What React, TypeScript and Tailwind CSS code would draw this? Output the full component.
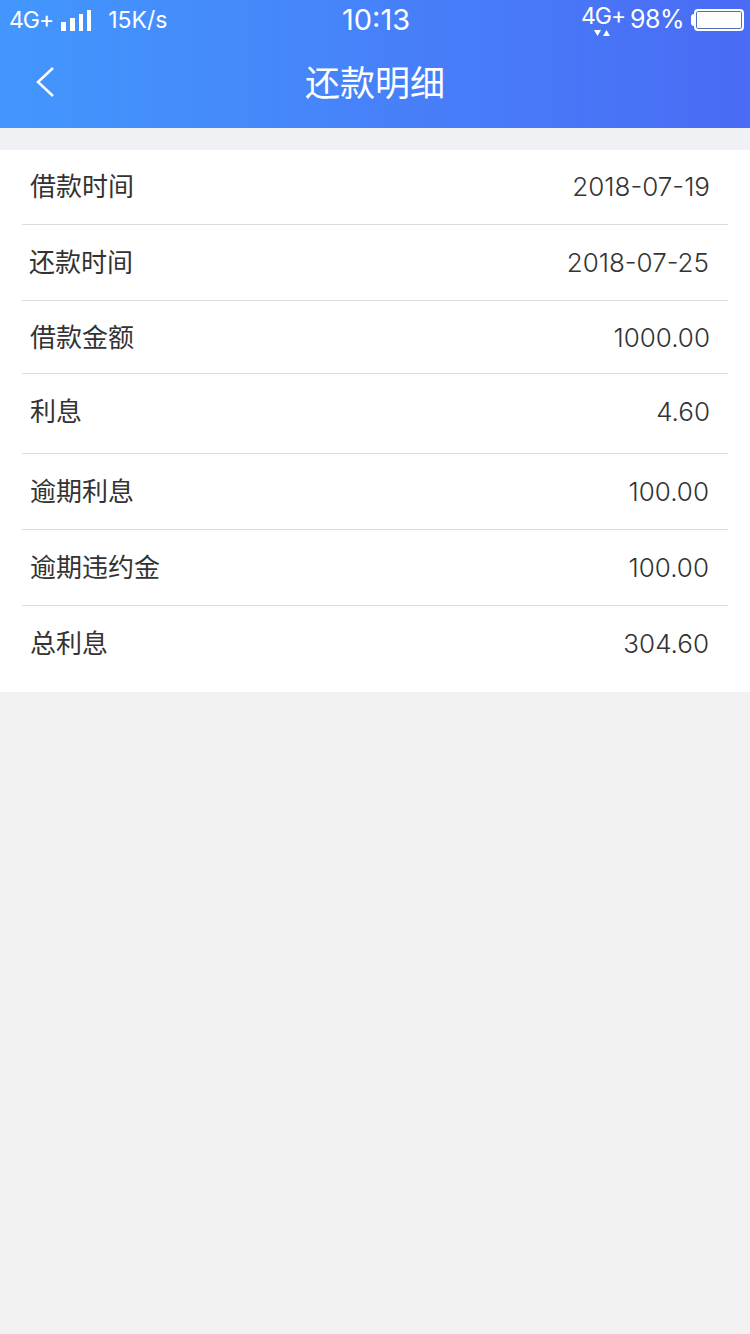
const rows = [
  { label: "借款时间", value: "2018-07-19", h: "h-[75px]", pb: "pb-[2px]", left: "pl-[30px]", right: "pr-[39px]" },
  { label: "还款时间", value: "2018-07-25", h: "h-[76px]", pb: "pb-[1px]", left: "pl-[29px]", right: "pr-[40px]" },
  { label: "借款金额", value: "1000.00", h: "h-[73px]", pb: "pb-0", left: "pl-[30px]", right: "pr-[39px]" },
  { label: "利息", value: "4.60", h: "h-[80px]", pb: "pb-[4px]", left: "pl-[30px]", right: "pr-[39px]" },
  { label: "逾期利息", value: "100.00", h: "h-[76px]", pb: "pb-[1px]", left: "pl-[30px]", right: "pr-[40px]" },
  { label: "逾期违约金", value: "100.00", h: "h-[76px]", pb: "pb-[1px]", left: "pl-[30px]", right: "pr-[40px]" },
];

function StatusBar() {
  return (
    <div className="relative flex h-10 items-center justify-between text-white">
      <div className="flex items-center pl-[9px] text-[23px] tracking-[-1px]">
        <span>4G+</span>
        <svg width="31" height="21" viewBox="0 0 31 21" className="ml-[8px]" fill="white">
          <rect x="0" y="12" width="5" height="9" />
          <rect x="9" y="8" width="5" height="13" />
          <rect x="18" y="4" width="4" height="17" />
          <rect x="26" y="0" width="4" height="21" />
        </svg>
        <span className="ml-[16px] tracking-[0px]">15K/s</span>
      </div>
      <span className="absolute left-[342px] top-[2px] text-[29px] leading-9">10:13</span>
      <div className="flex items-center pr-[6px]">
        <div className="relative mr-[8px] h-[30px] w-[41px]">
          <span className="absolute -top-[3px] left-0 text-[23px] leading-7 tracking-[-1px]">4G+</span>
          <svg width="20" height="8" viewBox="0 0 20 8" className="absolute left-[12px] top-[25px]" fill="white">
            <path d="M1 0h7L4.500 6z" />
            <path d="M10 6h7L13.500 0z" />
          </svg>
        </div>
        <span className="text-[25px] tracking-[-0.5px]">98%</span>
        <div className="ml-[7px] h-[12px] w-[3px] rounded-l-sm bg-white" />
        <div className="h-[22px] w-[50px] rounded-[4px] border-2 border-white bg-white p-0 shadow-[inset_0_0_0_1px_#4f6fc0]" />
      </div>
    </div>
  );
}

export default function App() {
  return (
    <div
      className="min-h-[1334px] w-[750px] bg-[#f2f2f3]"
      style={{ fontFamily: '"Inter", "Noto Sans CJK SC", sans-serif' }}
    >
      <header className="h-[128px] bg-gradient-to-r from-[#4297fd] to-[#4a6bf5]">
        <StatusBar />
        <div className="relative flex h-[88px] items-center justify-center pb-[2px] text-white">
          <svg width="20" height="32" viewBox="0 0 20 32" className="absolute left-[35px] top-[26px]" fill="none" stroke="white" strokeWidth="2.500">
            <path d="M18 2 3 16l15 14" />
          </svg>
          <h1 className="text-[35px] font-normal leading-none">还款明细</h1>
        </div>
      </header>
      <div className="h-[22px] bg-[#f0f1f4]" />
      <main className="h-[542px] bg-white">
        <div className="mx-[22px]">
          {rows.map((r) => (
            <div
              key={r.label}
              className={`flex items-center justify-between border-b border-[#dcdcdc] text-[26px] font-light text-[#333333] ${r.h} ${r.pb}`}
            >
              <span className={`${r.left === "pl-[29px]" ? "pl-[7px]" : "pl-[8px]"} font-normal`}>{r.label}</span>
              <span className={r.right === "pr-[40px]" ? "pr-[19px]" : "pr-[18px]"}>{r.value}</span>
            </div>
          ))}
          <div className="flex h-[76px] items-center justify-between pb-[1px] text-[26px] font-light text-[#333333]">
            <span className="pl-[8px] font-normal">总利息</span>
            <span className="pr-[19px]">304.60</span>
          </div>
        </div>
      </main>
    </div>
  );
}
